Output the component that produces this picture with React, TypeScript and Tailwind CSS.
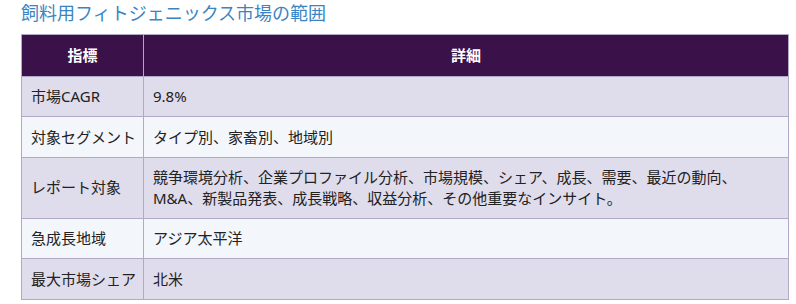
const rows: [string, string][] = [
  ["市場CAGR", "9.8%"],
  ["対象セグメント", "タイプ別、家畜別、地域別"],
  [
    "レポート対象",
    "競争環境分析、企業プロファイル分析、市場規模、シェア、成長、需要、最近の動向、M&A、新製品発表、成長戦略、収益分析、その他重要なインサイト。",
  ],
  ["急成長地域", "アジア太平洋"],
  ["最大市場シェア", "北米"],
];

export default function App() {
  return (
    <div
      className="bg-white px-[21px] pt-0 text-[15px] leading-[20.5px] text-[#222]"
      style={{ fontFamily: '"Noto Sans", "Noto Sans CJK JP", sans-serif' }}
    >
      <h2 className="mb-[7px] text-[18px] leading-[27px] font-normal text-[#3b84c3]">
        飼料用フィトジェニックス市場の範囲
      </h2>
      <table className="w-[768px] border-collapse border border-[#b2a9c8]">
        <thead>
          <tr className="bg-[#3a1149] text-white">
            <th className="w-[122px] border border-[#b2a9c8] py-[10px] text-center font-bold">指標</th>
            <th className="border border-[#b2a9c8] py-[10px] text-center font-bold">詳細</th>
          </tr>
        </thead>
        <tbody>
          {rows.map(([k, v], i) => (
            <tr key={k} className={i % 2 === 0 ? "bg-[#dfdcec]" : "bg-[#f3f6fb]"}>
              <td className="border border-[#b2a9c8] py-[9.5px] pl-[9px] pr-1 align-middle whitespace-nowrap">{k}</td>
              <td className="border border-[#b2a9c8] py-[9.5px] pl-[9px] pr-[40px] align-middle">{v}</td>
            </tr>
          ))}
        </tbody>
      </table>
    </div>
  );
}
